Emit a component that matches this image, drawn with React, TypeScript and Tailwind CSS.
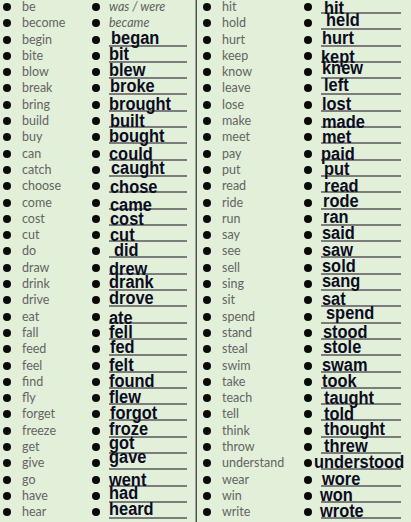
type Row = [string, string, number, number];

const left: Row[] = [
  ["be", "was / were", 0, 10.7],
  ["become", "became", 0, 10.4],
  ["begin", "began", 2, 10.7],
  ["bite", "bit", 0, 11.1],
  ["blow", "blew", 0, 10.8],
  ["break", "broke", 1, 11.2],
  ["bring", "brought", 0, 11.5],
  ["build", "built", 1, 12.6],
  ["buy", "bought", 0, 11.6],
  ["can", "could", 0, 12.6],
  ["catch", "caught", 2, 11],
  ["choose", "chose", 1, 14],
  ["come", "came", 1, 14.4],
  ["cost", "cost", 1, 13],
  ["cut", "cut", 1, 12.8],
  ["do", "did", 5, 12.2],
  ["draw", "drew", 0, 14.2],
  ["drink", "drank", 0, 11.2],
  ["drive", "drove", 0, 10.9],
  ["eat", "ate", 0, 13.6],
  ["fall", "fell", 0, 11.3],
  ["feed", "fed", 1, 10.4],
  ["feel", "felt", 0, 11.4],
  ["find", "found", 0, 11.8],
  ["fly", "flew", 0, 12.1],
  ["forget", "forgot", 1, 11.8],
  ["freeze", "froze", 0, 11.2],
  ["get", "got", 0, 9.2],
  ["give", "gave", 0, 6.9],
  ["go", "went", 0, 12.3],
  ["have", "had", 0, 9.3],
  ["hear", "heard", 0, 9.7],
];

const right: Row[] = [
  ["hit", "hit", 3, 13.3],
  ["hold", "held", 5, 9.7],
  ["hurt", "hurt", 1, 10.7],
  ["keep", "kept", 0, 13.8],
  ["know", "knew", 1, 8.8],
  ["leave", "left", 3, 10.2],
  ["lose", "lost", 1, 12.2],
  ["make", "made", 1, 13.6],
  ["meet", "met", 1, 12.3],
  ["pay", "paid", 0, 12.6],
  ["put", "put", 3, 12],
  ["read", "read", 3, 12.4],
  ["ride", "rode", 2, 10.4],
  ["run", "ran", 2, 10.3],
  ["say", "said", 1, 11.1],
  ["see", "saw", 1, 12.2],
  ["sell", "sold", 1, 10.9],
  ["sing", "sang", 1, 10.2],
  ["sit", "sat", 1, 11.6],
  ["spend", "spend", 5, 8.6],
  ["stand", "stood", 2, 11.3],
  ["steal", "stole", 2, 11],
  ["swim", "swam", 1, 11.4],
  ["take", "took", 1, 11.8],
  ["teach", "taught", 3, 12.8],
  ["tell", "told", 3, 13.2],
  ["think", "thought", 3, 11.2],
  ["throw", "threw", 3, 11.6],
  ["understand", "understood", -7, 11.9],
  ["wear", "wore", 1, 11.3],
  ["win", "won", -1, 11.7],
  ["write", "wrote", -1, 11.4],
];

function Dot() {
  return <span className="mt-[3px] h-[8px] w-[8px] shrink-0 rounded-full bg-[#0a0a0a]" />;
}

function Answer({ text, dx, base, given }: { text: string; dx: number; base: number; given: boolean }) {
  // given answers (first two rows) are printed, the rest are typed in
  if (given) {
    return (
      <span className="block whitespace-nowrap font-['Lato',sans-serif] text-[12.5px] italic leading-[14px] text-[#606060]">
        {text}
      </span>
    );
  }
  return (
    <span
      className="block origin-bottom-left whitespace-nowrap font-['Liberation_Sans',Arial,sans-serif] text-[16.4px] font-bold leading-[14px] text-[#0c0c22]"
      style={{ transform: `translate(${dx}px, ${base - 12.7}px) scaleY(1.08)` }}
    >
      {text}
    </span>
  );
}

function Column({ rows, side }: { rows: Row[]; side: "l" | "r" }) {
  const isLeft = side === "l";
  return (
    <div className={isLeft ? "flex w-[195px] flex-col pl-[3px]" : "flex flex-1 flex-col pl-[6px]"}>
      {rows.map(([word, past, dx, base], i) => (
        <div key={word} className="flex h-[16.3px] items-start">
          <Dot />
          <span
            className={
              (isLeft ? "w-[70px]" : "w-[82px]") +
              " ml-[11px] whitespace-nowrap font-['Lato',sans-serif] text-[12.5px] leading-[14px] text-[#646464]"
            }
          >
            {word}
          </span>
          <Dot />
          <div
            className={
              (isLeft ? "w-[78px]" : "w-[80px]") +
              " ml-[9px] h-[14px] border-b-2 " +
              (isLeft && i < 2 ? "border-transparent" : "border-[#7c7c7c]")
            }
          >
            <Answer text={past} dx={dx} base={base} given={isLeft && i < 2} />
          </div>
        </div>
      ))}
    </div>
  );
}

export default function App() {
  return (
    <div className="flex h-[522px] w-[411px] overflow-hidden bg-[#e2efd9]">
      <Column rows={left} side="l" />
      <div className="w-[2px] shrink-0 border-l border-[#a3a3a3] bg-[#4e4e4e]" />
      <Column rows={right} side="r" />
    </div>
  );
}
